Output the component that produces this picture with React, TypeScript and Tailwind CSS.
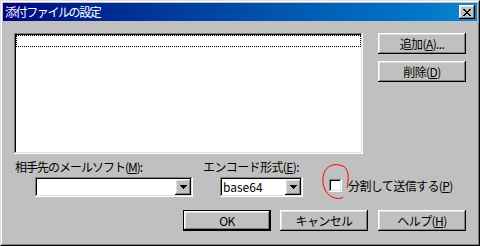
import React from "react";

const raised =
  "shadow-[inset_-1px_-1px_#000,inset_1px_1px_#fff,inset_-2px_-2px_#808080,inset_2px_2px_#dfdfdf]";
const sunken =
  "shadow-[inset_-1px_-1px_#fff,inset_1px_1px_#808080,inset_-2px_-2px_#dfdfdf,inset_2px_2px_#000]";

function Btn({ children, def = false }: { children: React.ReactNode; def?: boolean }) {
  if (def) {
    return (
      <div className="w-[88px] h-[21px] border border-black bg-[#c0c0c0]">
        <div className={`w-full h-full flex items-center justify-center ${raised}`}>{children}</div>
      </div>
    );
  }
  return (
    <div className={`w-[88px] h-[21px] bg-[#c0c0c0] flex items-center justify-center ${raised}`}>
      {children}
    </div>
  );
}

function Arrow() {
  return (
    <div className={`w-[16px] h-[16px] bg-[#c0c0c0] flex items-center justify-center ${raised}`}>
      <svg width="7" height="4" viewBox="0 0 7 4" shapeRendering="crispEdges">
        <path d="M0 0h7v1h-1v1h-1v1h-1v1h-1v-1h-1v-1h-1v-1h-1z" fill="#000" />
      </svg>
    </div>
  );
}

function CloseX() {
  const rows = [0, 1, 2, 3, 4, 5, 6];
  return (
    <svg width="8" height="7" viewBox="0 0 8 7" shapeRendering="crispEdges">
      {rows.map((i) => {
        const a = i <= 3 ? i : 6 - i;
        return (
          <g key={i}>
            <rect x={a} y={i} width={2} height={1} fill="#000" />
            <rect x={6 - a} y={i} width={2} height={1} fill="#000" />
          </g>
        );
      })}
    </svg>
  );
}

const U = ({ c }: { c: string }) => <span className="underline underline-offset-[1px]">{c}</span>;

export default function App() {
  return (
    <div
      className="relative w-[480px] h-[246px] bg-[#c0c0c0] border-t border-l border-t-[#dfdfdf] border-l-[#dfdfdf] border-r border-b border-r-black border-b-black text-[12px] text-black leading-[14px] tracking-[-0.6px]"
      style={{ fontFamily: '"Noto Sans CJK JP", "Noto Sans", sans-serif' }}
    >
      <div className="w-full h-full border-t border-l border-t-white border-l-white border-r border-b border-r-[#808080] border-b-[#808080] p-[1px] flex flex-col">
        {/* title bar */}
        <div className="h-[18px] flex items-center bg-gradient-to-r from-[#000080] to-[#1084d0] pl-[2px] pr-[2px]">
          <span className="text-white text-[12px] flex-1 tracking-[-1.4px]">添付ファイルの設定</span>
          <div className={`w-[16px] h-[14px] bg-[#c0c0c0] flex items-center justify-center ${raised}`}>
            <CloseX />
          </div>
        </div>

        {/* content */}
        <div className="flex flex-col pl-[11px] pt-[12px]">
          <div className="flex">
            <div className={`w-[349px] h-[121px] bg-white p-[2px] ${sunken}`}>
              <div className="h-[12px] border border-dotted border-black" />
            </div>
            <div className="flex flex-col ml-[15px] gap-[7px]">
              <Btn>
                追加(<U c="A" />)...
              </Btn>
              <Btn>
                削除(<U c="D" />)
              </Btn>
            </div>
          </div>

          <div className="flex mt-[6px]">
            <div className="w-[189px] pl-[1px] flex flex-col">
              <div className="h-[14px] tracking-[-1px]">
                相手先のメールソフト(<U c="M" />):
              </div>
              <div className={`mt-[3px] ml-[20px] w-[158px] h-[20px] bg-white flex items-center justify-end pr-[2px] ${sunken}`}>
                <Arrow />
              </div>
            </div>
            <div className="w-[126px] flex flex-col">
              <div className="h-[14px]">
                エンコード形式(<U c="E" />):
              </div>
              <div className={`mt-[3px] ml-[17px] w-[83px] h-[20px] bg-white flex items-center pl-[3px] pr-[2px] ${sunken}`}>
                <span className="flex-1 tracking-normal">base64</span>
                <Arrow />
              </div>
            </div>
            <div className="flex items-center mt-[19px] h-[13px] self-start">
              <div className={`w-[13px] h-[13px] bg-white ${sunken}`} />
              <span className="ml-[6px]">
                分割して送信する(<U c="P" />)
              </span>
            </div>
          </div>

          <div className="flex mt-[13px] ml-[169px]">
            <Btn def>OK</Btn>
            <div className="ml-[9px]">
              <Btn>キャンセル</Btn>
            </div>
            <div className="ml-[10px]">
              <Btn>
                ヘルプ(<U c="H" />)
              </Btn>
            </div>
          </div>
        </div>
      </div>

      <svg className="absolute left-0 top-0 pointer-events-none" width="480" height="246">
        <path
          d="M346 187 C348 178, 348 168, 342 165 C334 162, 326 164, 323 172 C320 181, 323 192, 331 196 C336 198, 340 198, 342 196"
          fill="none"
          stroke="#ff0000"
          strokeWidth="1"
        />
      </svg>
    </div>
  );
}
